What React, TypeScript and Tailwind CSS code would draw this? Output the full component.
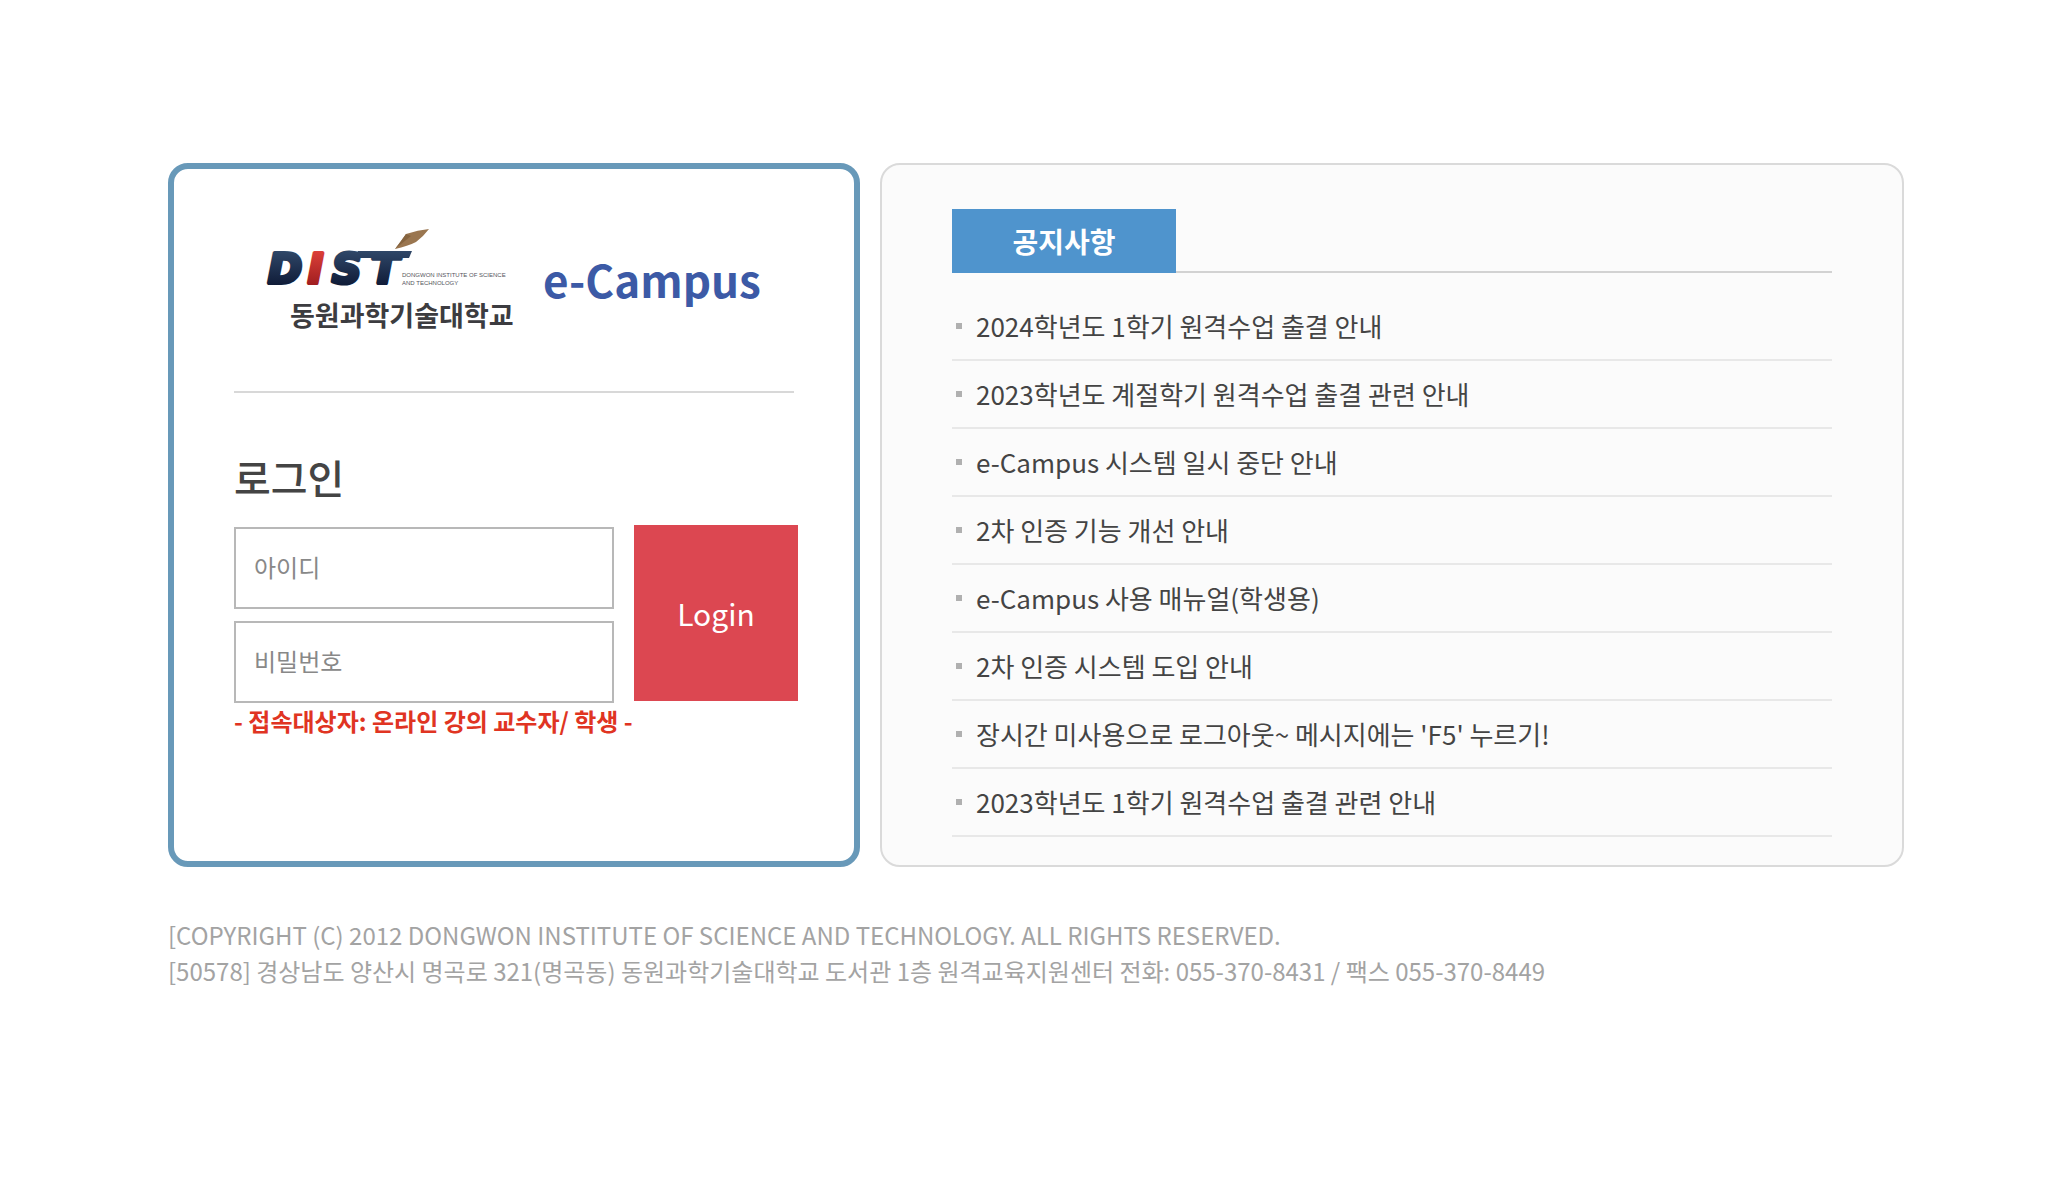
import React, { useState } from 'react';

const notices = [
    '2024학년도 1학기 원격수업 출결 안내',
    '2023학년도 계절학기 원격수업 출결 관련 안내',
    'e-Campus 시스템 일시 중단 안내',
    '2차 인증 기능 개선 안내',
    'e-Campus 사용 매뉴얼(학생용)',
    '2차 인증 시스템 도입 안내',
    "장시간 미사용으로 로그아웃~ 메시지에는 'F5' 누르기!",
    '2023학년도 1학기 원격수업 출결 관련 안내',
];

const Logo: React.FC = () => (
    <svg viewBox="0 0 560 120" className="w-full max-w-[560px]" role="img" aria-label="DIST 동원과학기술대학교 e-Campus">
        <defs>
            <linearGradient id="navy" gradientUnits="userSpaceOnUse" x1="0" y1="22" x2="0" y2="56">
                <stop offset="0" stopColor="#2f4768" />
                <stop offset="1" stopColor="#101c38" />
            </linearGradient>
            <linearGradient id="red" gradientUnits="userSpaceOnUse" x1="0" y1="22" x2="0" y2="56">
                <stop offset="0" stopColor="#dc4038" />
                <stop offset="1" stopColor="#a01e20" />
            </linearGradient>
        </defs>
        {/* Pen nib */}
        <path d="M161 20 Q167 13 172 5 Q184 1 195 0 Q189 8 182 13 Q174 17 161 20 Z" fill="#9a7650" />
        <path d="M161 20 L172 5 L177 7 Z" fill="#86643f" />
        {/* Stroke running from the S into the T */}
        <path d="M124 22 H178 L175 29 H122 Z" fill="url(#navy)" />
        <g
            fontFamily="'DejaVu Sans', sans-serif"
            fontWeight="700"
            fontStyle="italic"
            fontSize="41"
            strokeWidth="4"
            strokeLinejoin="round"
        >
            <text x="34" y="54" fill="url(#navy)" stroke="url(#navy)">D</text>
            <text x="74" y="54" fill="url(#red)" stroke="url(#red)">I</text>
            <text x="98" y="54" fill="url(#navy)" stroke="url(#navy)">S</text>
            <text x="137" y="54" fill="url(#navy)" stroke="url(#navy)">T</text>
        </g>
        <g fontFamily="'Liberation Sans Narrow', 'Liberation Sans', sans-serif" fontSize="6" fill="#55555c">
            <text x="168" y="48">DONGWON INSTITUTE OF SCIENCE</text>
            <text x="168" y="56">AND TECHNOLOGY</text>
        </g>
        <g fontFamily="'Noto Sans CJK KR', sans-serif" fontWeight="700">
            <text x="56" y="97" fontSize="27" fill="#3c3c40">동원과학기술대학교</text>
            <text x="309" y="69" fontSize="44" fill="#3c5aa6">e-Campus</text>
        </g>
    </svg>
);

const LoginForm: React.FC = () => {
    const [userId, setUserId] = useState('');
    const [password, setPassword] = useState('');

    return (
        <form onSubmit={(e) => e.preventDefault()}>
            <h1 className="mt-[52px] text-[40px] leading-[64px] font-medium text-[#444]">로그인</h1>
            <div className="mt-4 -mr-1 flex items-start gap-5">
                <div className="flex min-w-0 flex-1 flex-col gap-3 pt-0.5">
                    <input
                        type="text"
                        aria-label="아이디"
                        placeholder="아이디"
                        value={userId}
                        onChange={(e) => setUserId(e.target.value)}
                        className="h-[82px] w-full border-2 border-[#b8b8b8] bg-white px-[18px] pb-1 text-2xl text-[#444] placeholder:text-[#888]"
                    />
                    <input
                        type="password"
                        aria-label="비밀번호"
                        placeholder="비밀번호"
                        value={password}
                        onChange={(e) => setPassword(e.target.value)}
                        className="h-[82px] w-full border-2 border-[#b8b8b8] bg-white px-[18px] pb-1 text-2xl text-[#444] placeholder:text-[#888]"
                    />
                </div>
                <button type="submit" className="h-44 w-[164px] shrink-0 bg-[#dc4751] text-[30px] text-white">
                    Login
                </button>
            </div>
            <p className="text-2xl leading-9 font-bold text-[#e03422]">- 접속대상자: 온라인 강의 교수자/ 학생 -</p>
        </form>
    );
};

const NoticeBoard: React.FC = () => (
    <section className="rounded-[20px] border-2 border-[#dadada] bg-[#fbfbfb] px-[70px] pt-11 pb-7">
        <div className="flex border-b-2 border-[#d2d2d2]">
            <h2 className="-mb-0.5 flex h-16 w-56 items-center justify-center bg-[#4f94cd] text-[28px] font-bold text-white">
                공지사항
            </h2>
        </div>
        <ul className="mt-5">
            {notices.map((title) => (
                <li key={title} className="flex h-[68px] items-center gap-[14px] border-b-2 border-[#e8e8e8] pl-1">
                    <span className="h-1.5 w-1.5 shrink-0 bg-[#b0b0b0]"></span>
                    <a href="#" className="truncate pb-0.5 text-[26px] text-[#444]">{title}</a>
                </li>
            ))}
        </ul>
    </section>
);

const App: React.FC = () => {
    return (
        <div className="min-h-screen bg-white px-[168px] pt-[163px] font-['Noto_Sans_CJK_KR',sans-serif]">
            <main className="grid grid-cols-[692fr_1024fr] gap-5">
                <section className="rounded-[20px] border-[6px] border-[#6899b9] bg-white px-[60px] pt-[60px]">
                    <div className="border-b-2 border-[#d8d8d8] pb-[42px]">
                        <Logo />
                    </div>
                    <LoginForm />
                </section>
                <NoticeBoard />
            </main>
            <footer className="mt-[50px] text-2xl leading-9 text-[#a3a3a3]">
                <p>[COPYRIGHT (C) 2012 DONGWON INSTITUTE OF SCIENCE AND TECHNOLOGY. ALL RIGHTS RESERVED.</p>
                <p>[50578] 경상남도 양산시 명곡로 321(명곡동) 동원과학기술대학교 도서관 1층 원격교육지원센터 전화: 055-370-8431 / 팩스 055-370-8449</p>
            </footer>
        </div>
    );
};

export default App;
